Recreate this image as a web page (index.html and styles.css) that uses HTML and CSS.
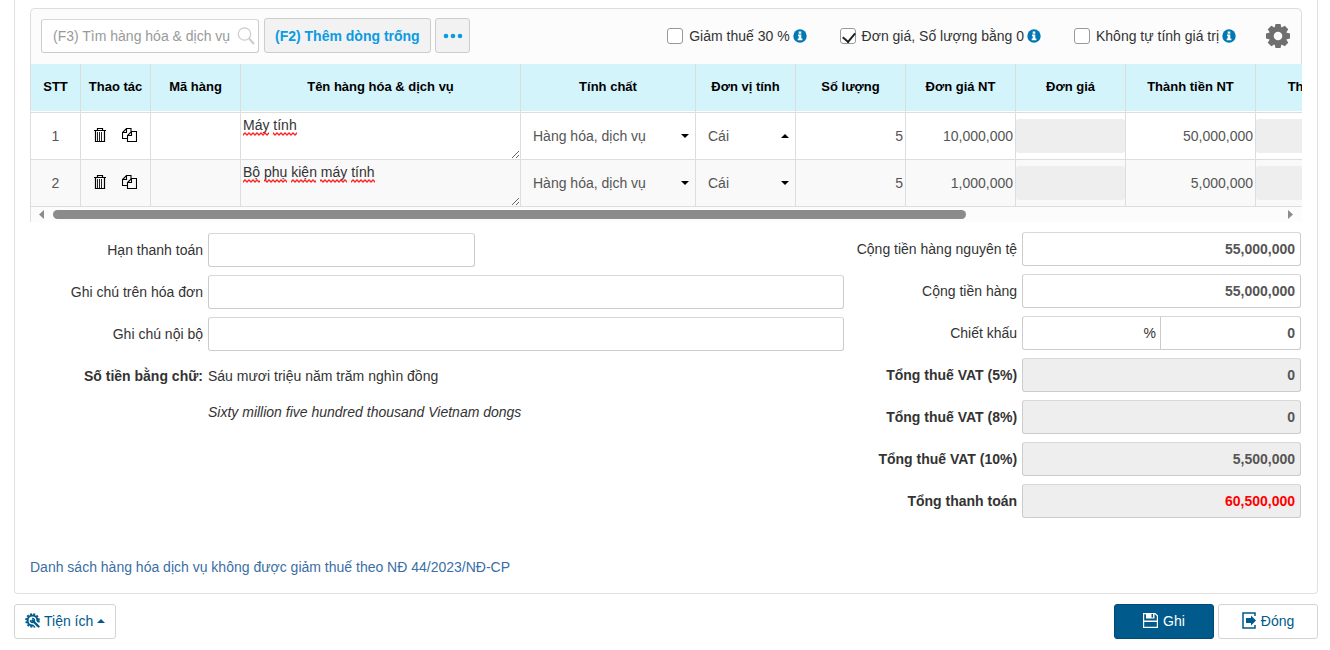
FILE: index.html
```html
<!DOCTYPE html>
<html lang="vi">
<head>
<meta charset="utf-8">
<meta name="viewport" content="width=device-width, initial-scale=1">
<title>Hóa đơn</title>
<link rel="stylesheet" href="styles.css">
</head>
<body>
<svg class="defs" width="0" height="0" aria-hidden="true">
  <defs>
    <symbol id="info" viewBox="0 0 14 14"><circle cx="7" cy="7" r="6.700" fill="#0078b4"/><path d="M5 5.600h3.300v4h1.100v1.600H4.700V9.600h1V7.100H5zM5.700 2.500h2.600v2.200H5.700z" fill="#fff"/></symbol>
    <symbol id="trash" viewBox="0 0 12 14"><path d="M0 2.500h12M3.500 2.500v-2h5v2M1.500 3v10.500h9V3" fill="none" stroke="#000" stroke-width="1.200"/><path d="M3.500 4v9M5.500 4v9M7.500 4v9" stroke="#222" stroke-width="1"/></symbol>
    <symbol id="copy" viewBox="0 0 15 14"><path d="M5.500 10.500h-5v-6l4-4h4.500v3M.5 4.500h4v-4M5.500 13.500v-6l4-4h5v10zM5.500 7.500h4v-4" fill="none" stroke="#000" stroke-width="1.100"/></symbol>
    <symbol id="down" viewBox="0 0 8 4"><path d="M0 0h8L4 4z"/></symbol>
    <symbol id="up" viewBox="0 0 8 4"><path d="M0 4h8L4 0z"/></symbol>
    <pattern id="wave" width="4" height="4" patternUnits="userSpaceOnUse"><path d="M-1 4L0 3L2 1L4 3L5 4" fill="none" stroke="#f22" stroke-width="1.300"/></pattern>
  </defs>
</svg>
<main class="page">
  <section class="panel">
    <div class="grid-box">
      <div class="toolbar">
        <div class="search">
          <input class="field search-input" type="text" aria-label="Tìm hàng hóa và dịch vụ" placeholder="(F3) Tìm hàng hóa &amp; dịch vụ">
          <svg class="search-icon" width="18" height="18" viewBox="0 0 18 18" aria-hidden="true"><circle cx="7.500" cy="7" r="6.200" fill="none" stroke="#ccc" stroke-width="1.200"/><path d="M12 11.500l5 5.500" stroke="#ccc" stroke-width="2"/></svg>
        </div>
        <button class="tool-btn" type="button">(F2) Thêm dòng trống</button>
        <button class="tool-btn more" type="button" aria-label="Thêm"><svg width="20" height="6" viewBox="0 0 20 6"><circle cx="3" cy="3" r="2.300"/><circle cx="10" cy="3" r="2.300"/><circle cx="17" cy="3" r="2.300"/></svg></button>
        <div class="options">
          <label class="option"><input type="checkbox"><span>Giảm thuế 30 %</span><svg width="14" height="14"><use href="#info"/></svg></label>
          <label class="option"><input type="checkbox" checked><span>Đơn giá, Số lượng bằng 0</span><svg width="14" height="14"><use href="#info"/></svg></label>
          <label class="option"><input type="checkbox"><span>Không tự tính giá trị</span><svg width="14" height="14"><use href="#info"/></svg></label>
          <button class="gear" type="button" aria-label="Cài đặt"><svg width="26" height="26" viewBox="-13 -13 26 26"><g fill="#6f6f6f"><circle r="9"/><path d="M-3.500-8L-2.500-12H2.500L3.500-8V8L2.500 12H-2.500L-3.500 8z"/><path d="M-3.500-8L-2.500-12H2.500L3.500-8V8L2.500 12H-2.500L-3.500 8z" transform="rotate(45)"/><path d="M-3.500-8L-2.500-12H2.500L3.500-8V8L2.500 12H-2.500L-3.500 8z" transform="rotate(90)"/><path d="M-3.500-8L-2.500-12H2.500L3.500-8V8L2.500 12H-2.500L-3.500 8z" transform="rotate(135)"/></g><circle r="4.300" fill="#fcfcfc"/></svg></button>
        </div>
      </div>
      <div class="table-wrap">
        <table class="items">
          <colgroup><col class="w50"><col class="w70"><col class="w90"><col class="w280"><col class="w175"><col class="w100"><col class="w110"><col class="w110"><col class="w110"><col class="w130"><col class="w130"></colgroup>
          <thead><tr><th>STT</th><th>Thao tác</th><th>Mã hàng</th><th>Tên hàng hóa &amp; dịch vụ</th><th>Tính chất</th><th>Đơn vị tính</th><th>Số lượng</th><th>Đơn giá NT</th><th>Đơn giá</th><th>Thành tiền NT</th><th>Thành tiền</th></tr></thead>
          <tbody>
            <tr>
              <td class="center">1</td>
              <td><div class="actions"><button type="button" aria-label="Xóa"><svg width="12" height="14"><use href="#trash"/></svg></button><button type="button" aria-label="Sao chép"><svg width="15" height="14"><use href="#copy"/></svg></button></div></td>
              <td></td>
              <td><div class="name"><textarea aria-label="Tên hàng hóa" spellcheck="false">Máy tính</textarea><svg class="squiggle" width="140" height="4" aria-hidden="true"><path d="M0 0h26v4H0zM30 0h24v4H30z" fill="url(#wave)"/></svg></div></td>
              <td><div class="pick"><select aria-label="Tính chất"><option>Hàng hóa, dịch vụ</option></select><svg width="8" height="4"><use href="#down"/></svg></div></td>
              <td><div class="pick"><select aria-label="Đơn vị tính"><option>Cái</option></select><svg width="8" height="4"><use href="#up"/></svg></div></td>
              <td><input class="cell" aria-label="Số lượng" value="5"></td>
              <td><input class="cell" aria-label="Đơn giá NT" value="10,000,000"></td>
              <td><input class="cell" aria-label="Đơn giá" disabled></td>
              <td><input class="cell" aria-label="Thành tiền NT" value="50,000,000"></td>
              <td><input class="cell" aria-label="Thành tiền" disabled></td>
            </tr>
            <tr>
              <td class="center">2</td>
              <td><div class="actions"><button type="button" aria-label="Xóa"><svg width="12" height="14"><use href="#trash"/></svg></button><button type="button" aria-label="Sao chép"><svg width="15" height="14"><use href="#copy"/></svg></button></div></td>
              <td></td>
              <td><div class="name"><textarea aria-label="Tên hàng hóa" spellcheck="false">Bộ phụ kiện máy tính</textarea><svg class="squiggle" width="140" height="4" aria-hidden="true"><path d="M0 0h17v4H0zM21 0h23v4H21zM48 0h25v4H48zM77 0h27v4H77zM108 0h24v4H108z" fill="url(#wave)"/></svg></div></td>
              <td><div class="pick"><select aria-label="Tính chất"><option>Hàng hóa, dịch vụ</option></select><svg width="8" height="4"><use href="#down"/></svg></div></td>
              <td><div class="pick"><select aria-label="Đơn vị tính"><option>Cái</option></select><svg width="8" height="4"><use href="#down"/></svg></div></td>
              <td><input class="cell" aria-label="Số lượng" value="5"></td>
              <td><input class="cell" aria-label="Đơn giá NT" value="1,000,000"></td>
              <td><input class="cell" aria-label="Đơn giá" disabled></td>
              <td><input class="cell" aria-label="Thành tiền NT" value="5,000,000"></td>
              <td><input class="cell" aria-label="Thành tiền" disabled></td>
            </tr>
          </tbody>
        </table>
      </div>
      <div class="scrollbar" aria-hidden="true">
        <svg width="5" height="9" viewBox="0 0 5 9"><path d="M5 0v9L0 4.500z" fill="#8b8b8b"/></svg>
        <div class="track"><div class="thumb"></div></div>
        <svg width="5" height="9" viewBox="0 0 5 9"><path d="M0 0v9L5 4.500z" fill="#8b8b8b"/></svg>
      </div>
    </div>

    <div class="summary">
      <div class="col notes">
        <div class="row"><label for="due">Hạn thanh toán</label><input class="field short" id="due"></div>
        <div class="row"><label for="note">Ghi chú trên hóa đơn</label><input class="field" id="note"></div>
        <div class="row"><label for="inner">Ghi chú nội bộ</label><input class="field" id="inner"></div>
        <div class="row"><strong>Số tiền bằng chữ:</strong><span>Sáu mươi triệu năm trăm nghìn đồng</span></div>
        <div class="row english"><em>Sixty million five hundred thousand Vietnam dongs</em></div>
      </div>
      <div class="col totals">
        <div class="row"><label for="t1">Cộng tiền hàng nguyên tệ</label><input class="field" id="t1" value="55,000,000"></div>
        <div class="row"><label for="t2">Cộng tiền hàng</label><input class="field" id="t2" value="55,000,000"></div>
        <div class="row"><label for="t3">Chiết khấu</label><div class="field split"><input id="t3p" aria-label="Phần trăm chiết khấu"><span>%</span><input class="amount" id="t3" value="0"></div></div>
        <div class="row strong"><label for="t4">Tổng thuế VAT (5%)</label><input class="field" id="t4" value="0" disabled></div>
        <div class="row strong"><label for="t5">Tổng thuế VAT (8%)</label><input class="field" id="t5" value="0" disabled></div>
        <div class="row strong"><label for="t6">Tổng thuế VAT (10%)</label><input class="field" id="t6" value="5,500,000" disabled></div>
        <div class="row strong"><label for="t7">Tổng thanh toán</label><input class="field grand" id="t7" value="60,500,000" disabled></div>
      </div>
    </div>
    <a class="doc-link" href="#">Danh sách hàng hóa dịch vụ không được giảm thuế theo NĐ 44/2023/NĐ-CP</a>
  </section>

  <footer class="footer">
    <button class="btn utility" type="button"><svg width="15" height="15" viewBox="-7.500 -7.500 15 15"><circle r="4.900" fill="none" stroke="#005a8b" stroke-width="2"/><circle r="6.400" fill="none" stroke="#005a8b" stroke-width="1.800" stroke-dasharray="2 1.351"/><path d="M2 2L7 7" stroke="#fff" stroke-width="4.600"/><path d="M0 0L6 6" stroke="#005a8b" stroke-width="2.400" stroke-linecap="round"/><path d="M-2-.4A2 2 0 1 0-.4-2" fill="none" stroke="#005a8b" stroke-width="1.500"/></svg><span>Tiện ích</span><svg class="caret" width="8" height="4"><use href="#up"/></svg></button>
    <div class="footer-right">
      <button class="btn primary" type="button"><svg width="15" height="15" viewBox="0 0 15 15"><path d="M.6.6h11.600l2.200 2.200v11.600H.6z" fill="none" stroke="#fff" stroke-width="1.200"/><path d="M3 0h8.500v5.500H3zM1 7.500h13v1.500H1z" fill="#fff"/><path d="M8.500 1h1.500v3.500H8.500z" fill="#005a8b"/></svg><span>Ghi</span></button>
      <button class="btn" type="button"><svg width="14" height="17" viewBox="0 0 14 17"><path d="M13 4V1H1v15h12v-3" fill="none" stroke="#005a8b" stroke-width="1.500"/><path d="M4 6h5V3.500l5 5L9 13.500V11H4z" fill="#005a8b"/></svg><span>Đóng</span></button>
    </div>
  </footer>
</main>
</body>
</html>
```
FILE: styles.css
```css
* { box-sizing: border-box; }
body { margin: 0; background: #fff; color: #333; font: 14px/20px "Liberation Sans", Arial, sans-serif; }
button, input, select, textarea { font: inherit; color: inherit; }
button { cursor: pointer; }
svg { display: block; flex: none; }
.defs { position: absolute; }
.page { padding: 0 12px 8px 14px; }

.panel { padding: 8px 15px 16px; border: 1px solid #e4dfe1; border-top: 0; border-radius: 0 0 4px 4px; }
.grid-box { border: 1px solid #ddd; border-width: 1px 0 0 1px; border-radius: 5px 5px 0 0; background: #fcfcfc; }
.toolbar { display: flex; align-items: center; height: 55px; padding: 0 10px 2px; border-right: 1px solid #ddd; border-radius: 0 5px 0 0; }

.field { width: 100%; min-width: 0; height: 34px; padding: 0 5px; border: 1px solid #ccc; border-top-color: #d8d8d8; border-radius: 3px; background: #fff; color: #555; outline: 0; }
.search { position: relative; width: 218px; margin-right: 5px; }
.search-input { padding: 0 11px; }
.search-input::placeholder { color: #999; opacity: 1; }
.search-icon { position: absolute; right: 4px; top: 8px; }
.tool-btn { height: 35px; padding: 0 10px; border: 1px solid #ccc; border-radius: 3px; background: #f2f2f2; color: #0b9be3; font-weight: bold; white-space: nowrap; }
.more { width: 35px; margin-left: 4px; padding: 0 7px; fill: #0b9be3; }
.options { display: flex; align-items: center; margin-left: auto; white-space: nowrap; }
.option { display: flex; align-items: center; margin-right: 33px; }
.option:last-of-type { margin-right: 29px; }
.option input { appearance: none; width: 16px; height: 16px; margin: 0 6px 0 0; border: 1px solid #999; border-radius: 3px; background: #fff; }
.option input:checked::before { content: ""; display: block; width: 6px; height: 10px; margin: 1px 0 0 4px; border: solid #222; border-width: 0 2px 2px 0; transform: rotate(40deg); }
.option svg { margin-left: 3px; }
.gear { padding: 0; border: 0; background: none; }

.table-wrap { overflow: hidden; background: #fff; }
.items { width: 1355px; table-layout: fixed; border-collapse: separate; border-spacing: 0; }
.w50 { width: 50px; } .w70 { width: 70px; } .w90 { width: 90px; } .w100 { width: 100px; }
.w110 { width: 110px; } .w130 { width: 130px; } .w175 { width: 175px; } .w280 { width: 280px; }
.items th { height: 49px; padding: 0 0 3px; border: solid #ddd; border-width: 0 1px 1px 0; background: #d4f4fc; box-shadow: inset 0 -1px #fff; color: #000; font-size: 13px; }
.items td { height: 47px; padding: 0; border: solid #ddd; border-width: 0 1px 1px 0; color: #555; }
.items tbody tr:nth-child(2) { background: #f9f9f9; }
.items .center { text-align: center; }
.actions { display: flex; justify-content: center; align-items: center; gap: 16px; padding: 0 0 2px; }
.actions button { padding: 0; border: 0; background: none; }
.name { position: relative; height: 46px; }
.name textarea { display: block; width: 100%; height: 46px; padding: 2px; border: 0; outline: 0; background: transparent; color: #333; resize: both; }
.squiggle { position: absolute; left: 2px; top: 19px; }
.pick { position: relative; }
.pick select { display: block; width: 100%; height: 34px; padding: 0 12px; border: 0; outline: 0; background: transparent; appearance: none; }
.pick svg { position: absolute; right: 6px; top: 15px; pointer-events: none; }
.cell { display: block; width: 100%; height: 34px; padding: 0 2px; border: 0; border-radius: 3px; outline: 0; background: transparent; text-align: right; }
.cell:disabled { background: #eee; }
.scrollbar { display: flex; align-items: center; gap: 9px; height: 15px; padding: 0 9px 0 8px; }
.track { flex: 1; }
.thumb { width: 74.5%; height: 9px; border-radius: 5px; background: #8b8b8b; }

.summary { display: grid; grid-template-columns: 64fr 36fr; }
.col { display: flex; flex-direction: column; gap: 8px; padding-top: 10px; }
.notes { padding-top: 11px; }
.totals { padding-right: 1px; }
.row { display: grid; grid-template-columns: 173px minmax(0, 1fr); column-gap: 5px; align-items: center; min-height: 34px; }
.row label, .row strong { text-align: right; white-space: nowrap; }
.short { width: 42%; }
.english { min-height: 22px; }
.english em { grid-column: 2; }
.strong label { font-weight: bold; }
.totals .field { text-align: right; font-weight: bold; }
.totals .field:disabled { background: #eee; }
.totals .grand:disabled { color: #f00; }
.totals .split { display: flex; align-items: center; padding: 0; }
.split input { flex: 1; width: 0; height: 32px; padding: 0 5px; border: 0; outline: 0; background: transparent; text-align: right; }
.split span { padding-right: 4px; font-weight: normal; color: #333; }
.split .amount { flex: 0 0 140px; border-left: 1px solid #ccc; }

.doc-link { display: inline-block; margin-top: 39px; color: #3a6ea5; text-decoration: none; }

.footer { display: flex; justify-content: space-between; padding-top: 10px; }
.footer-right { display: flex; gap: 4px; }
.btn { display: flex; align-items: center; justify-content: center; gap: 5px; min-width: 100px; height: 35px; padding: 0 10px 2px; border: 1px solid #d4d4d4; border-radius: 3px; background: #fff; color: #005a8b; fill: #005a8b; }
.utility { gap: 4px; }
.primary { border-color: #004a73; background: #005a8b; color: #fff; }
```
